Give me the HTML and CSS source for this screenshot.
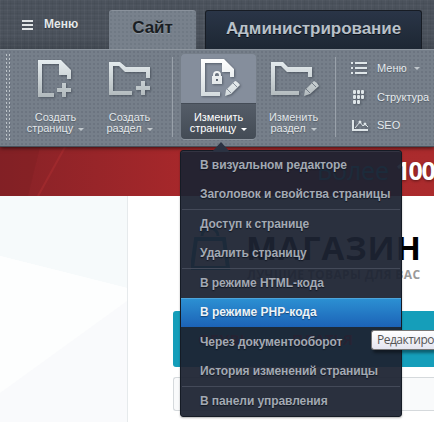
FILE: index.html
```html
<!DOCTYPE html>
<html lang="ru">
<head>
<meta charset="utf-8">
<title>Магазин</title>
<link rel="stylesheet" href="styles.css">
</head>
<body>
<svg class="defs" width="0" height="0" aria-hidden="true">
  <defs>
    <linearGradient id="metal" gradientUnits="userSpaceOnUse" x1="0" y1="0" x2="0" y2="39"><stop offset="0" stop-color="#e6edf0"/><stop offset="1" stop-color="#aeb6b9"/></linearGradient>
    <linearGradient id="bright" gradientUnits="userSpaceOnUse" x1="0" y1="0" x2="0" y2="39"><stop offset="0" stop-color="#ffffff"/><stop offset="1" stop-color="#d2dadd"/></linearGradient>
  </defs>
</svg>
<div class="panel">
  <header class="topbar">
    <div class="start"><svg width="11" height="10"><path d="M0 1h11M0 5h11M0 9h11" stroke="#e2e6e8" stroke-width="2"/></svg><span class="t" >Меню</span></div>
    <div class="tab tab-site"><span>Сайт</span></div>
    <div class="tab tab-admin"><span>Администрирование</span></div>
  </header>
  <div class="toolbar">
    <div class="grip"></div>
    <div class="tool create-page">
      <svg width="36" height="39"><path fill="url(#metal)" fill-rule="evenodd" d="M0 0H23L33 10V19H29V15H21V4H4V33H16V37H0Z"/><path fill="url(#metal)" d="M24 23h4v5h5v4h-5v5h-4v-5h-5v-4h5z"/></svg>
      <div class="label">Создать<br>страницу<i></i></div>
    </div>
    <div class="tool create-section">
      <svg width="42" height="39"><path fill="url(#metal)" d="M0 2H11L17 7H41V18H37V12H16L10 6H4V31H23V35H0Z"/><path fill="url(#metal)" d="M32 21h4v5h5v4h-5v5h-4v-5h-5v-4h5z"/></svg>
      <div class="label">Создать<br>раздел<i></i></div>
    </div>
    <div class="divider first"></div>
    <div class="tool edit-page">
      <svg width="40" height="39"><path fill="url(#bright)" d="M0 0H23L33 10V18H29V13H21V4H4V33H19V37H0Z"/><path fill="url(#bright)" fill-rule="evenodd" d="M11 17h1v-1a4 4 0 0 1 8 0v1h1v8H11ZM14 17h4v-1a2 2 0 0 0-4 0ZM15 20v2h2v-2Z"/><path fill="url(#bright)" d="M24 37l1-6 9-9q2 0 5 4L30 35Z"/><path d="M26 30l4 4M32 24l4 4" stroke="#858e9a"/></svg>
      <div class="label">Изменить<br>страницу<i></i></div>
    </div>
    <div class="tool edit-section">
      <svg width="48" height="39"><path fill="url(#metal)" d="M0 2H12L17 7H41V17H37V12H16L10 6H4V31H28V35H0Z"/><path fill="url(#metal)" d="M33 36l1-6 9-9q3 1 5 5L39 34Z"/><path d="M35 29l4 4M41 23l4 4" stroke="#737c86"/></svg>
      <div class="label">Изменить<br>раздел<i></i></div>
    </div>
    <div class="divider second"></div>
    <nav class="links">
      <div><svg width="17" height="14"><path d="M4 2h12M4 7h12M4 12h12" stroke="#dfe6e9" stroke-width="2"/><path d="M0 2h2M0 7h2M0 12h2" stroke="#dfe6e9" stroke-width="2"/></svg><span>Меню</span><i></i></div>
      <div><svg width="17" height="15"><g fill="#dfe6e9"><rect x="2" width="3" height="4" rx="1"/><rect x="6" width="3" height="4" rx="1"/><rect x="10" width="3" height="4" rx="1"/><rect x="2" y="5" width="3" height="4" rx="1"/><rect x="6" y="5" width="3" height="4" rx="1"/><rect x="10" y="5" width="3" height="4" rx="1"/><rect x="2" y="10" width="3" height="4" rx="1"/><rect x="6" y="10" width="3" height="4" rx="1"/></g></svg><span>Структура</span></div>
      <div><svg width="17" height="14"><path d="M2 1v10h15" fill="none" stroke="#dfe6e9" stroke-width="2"/><path d="M4 9l5-6 3 4 2-2 3 3" fill="none" stroke="#dfe6e9"/><circle cx="9" cy="3" r="1.5" fill="#dfe6e9"/><circle cx="14" cy="5" r="1.5" fill="#dfe6e9"/></svg><span>SEO</span></div>
    </nav>
  </div>
</div>
<main class="site">
  <section class="banner">
    <svg class="rays" width="434" height="49"><path d="M0 0h40L28 49H0Z" fill="#761d22" opacity=".3"/><path d="M65 0L38 49" stroke="#bb3436" stroke-width="2" opacity=".35"/></svg>
    <p><span>Более</span> <b>100</b></p>
  </section>
  <div class="body">
    <aside><svg width="127" height="226"><path d="M0 0H127V92L0 60Z" fill="#f6fafb"/><path d="M0 60L127 92V105L0 197Z" fill="#fdfefe"/><path d="M0 197L127 105V226H0Z" fill="#f9fafc"/></svg></aside>
    <section class="content">
      <div class="brand">
        <svg width="40" height="50"><path d="M5 17H33L37 46H1Z" fill="none" stroke="#159cb8" stroke-width="4"/><path d="M11 14a8 8 0 0 1 16 0" fill="none" stroke="#159cb8" stroke-width="3"/></svg>
        <div><h1>МАГАЗИН</h1><p>ЛУЧШИЕ ТОВАРЫ ДЛЯ ВАС</p></div>
      </div>
      <nav class="shop"><span>ОБУВЬ</span><span>ПЛАТЬЯ</span></nav>
      <div class="search"></div>
    </section>
  </div>
</main>
<div class="menu">
  <svg class="arrow" width="18" height="10"><path d="M0 10L9 0L18 10Z" fill="#2b3242"/></svg>
  <ul>
    <li><span>В визуальном редакторе</span></li>
    <li class="end"><span>Заголовок и свойства страницы</span></li>
    <li><span>Доступ к странице</span></li>
    <li class="end"><span>Удалить страницу</span></li>
    <li><span>В режиме HTML-кода</span></li>
    <li class="active"><span>В режиме PHP-кода</span></li>
    <li><span>Через документооборот</span></li>
    <li class="end"><span>История изменений страницы</span></li>
    <li><span>В панели управления</span></li>
  </ul>
</div>
<div class="tooltip">Редактиро</div>
</body>
</html>
```
FILE: styles.css
```css
* { box-sizing: border-box; }
body { margin: 0; width: 434px; height: 422px; overflow: hidden; position: relative; background: #fff; font-family: "Liberation Sans", Arial, sans-serif; }
.defs { position: absolute; }
svg { display: block; flex: none; }
p, h1, ul { margin: 0; padding: 0; }
.panel { position: relative; z-index: 1; height: 147px; box-shadow: 0 1px 4px rgba(0,0,0,.65); }
.topbar { height: 49px; display: flex; align-items: flex-end; background: repeating-linear-gradient(90deg, rgba(255,255,255,.03) 0 1px, transparent 1px 3px, rgba(0,0,0,.04) 3px 4px, transparent 4px 7px), repeating-linear-gradient(rgba(255,255,255,.025) 0 1px, transparent 1px 3px, rgba(0,0,0,.04) 3px 4px, transparent 4px 5px), linear-gradient(#4b525c 75%, #414851); }
.start { width: 109px; height: 49px; padding-left: 22px; display: flex; align-items: center; gap: 11px; color: #e3e7e9; font-weight: bold; font-size: 12px; }
.start .t { text-shadow: 0 1px 1px #30363e; position: relative; top: -1px; }
.tab { height: 39px; border-radius: 3px 3px 0 0; font-weight: bold; font-size: 17px; white-space: nowrap; text-align: center; line-height: 36px; }
.tab-site { width: 87px; background: radial-gradient(circle, #707984 .7px, transparent .9px) 0 0 / 4px 4px, #78818c; color: #1a1e23; box-shadow: inset 0 1px #8a929c; text-shadow: 0 1px #929ba5; }
.tab-admin { width: 217px; margin-left: 9px; background: linear-gradient(#2a3547, #1d2733); border: 1px solid #171c24; border-bottom: 0; color: #b9c1c9; text-shadow: 0 1px #0b1018; line-height: 35px; letter-spacing: -.05px; }
.toolbar { height: 98px; display: flex; border-top: 1px solid #8e969f; border-bottom: 1px solid #48505a; background: radial-gradient(circle, #6c7580 .7px, transparent .9px) 0 0 / 4px 4px, #767f8a; }
.grip { width: 4px; height: 88px; margin: 4px 0 0 6px; background: linear-gradient(90deg, #bdc4c9 1px, transparent 1px 3px, #bdc4c9 3px) 0 0 / 4px 2px; -webkit-mask: repeating-linear-gradient(#000 0 2px, transparent 2px 4px); mask: repeating-linear-gradient(#000 0 2px, transparent 2px 4px); }
.tool { width: 75px; padding-top: 10px; font-size: 11px; line-height: 11px; text-align: center; color: #e1e6e9; text-shadow: 0 1px 1px #515a65; }
.tool svg { filter: drop-shadow(1px 1px 1px rgba(40,48,58,.5)); }
.label { margin-top: 13px; white-space: nowrap; letter-spacing: -.05px; }
i { display: inline-block; width: 0; height: 0; border: 3px solid transparent; border-top-color: #c0c7cc; border-bottom: 0; margin: 0 0 1px 5px; }
.create-page { margin-left: 8px; }
.create-page svg { margin-left: 20px; }
.create-section { margin-left: -1px; }
.create-section svg { margin-left: 17px; }
.divider { width: 1px; height: 80px; margin-top: 7px; background: #99a1aa; }
.first { margin-left: 5px; }
.edit-page { width: 75px; height: 85px; margin: 4px 0 0 8px; padding-top: 5px; border-radius: 4px; background: linear-gradient(#858e9c 49px, #343b45 49px, #555d68 50px, #434b55); box-shadow: 0 1px #8e969f; color: #fff; }
.edit-page svg { margin-left: 20px; }
.edit-page i { border-top-color: #fff; }
.edit-page .label { margin-top: 14px; }
.edit-section svg { margin-left: 15px; }
.second { margin-left: 4px; }
.links { margin: 10px 0 0 15px; font-size: 11px; color: #e5eaed; text-shadow: 0 1px 1px #515a65; }
.links div { display: flex; align-items: center; height: 16px; margin-bottom: 13px; white-space: nowrap; }
.links svg { margin-right: 9px; filter: drop-shadow(1px 1px 1px rgba(40,48,58,.5)); }
.links i { margin: 1px 0 0 7px; }
.links div:last-child span { position: relative; top: -1px; }
.banner { position: relative; height: 49px; background: linear-gradient(90deg, #872227, #a9282b 45%, #ab2b2d); overflow: hidden; }
.rays { position: absolute; left: 0; top: 0; }
.banner p { position: relative; margin-left: 317px; font: 25px/46px "Open Sans", sans-serif; color: #fff; white-space: nowrap; text-shadow: 0 1px 3px rgba(0,0,0,.45); display: flex; gap: 7px; letter-spacing: -.2px; }
.banner span { color: #1fa5c0; }
.banner b { letter-spacing: -1.4px; }
.body { display: flex; height: 226px; }
aside { width: 128px; border-right: 1px solid #e6eaec; }
.content { width: 306px; padding: 28px 0 0 45px; }
.brand { display: flex; gap: 13px; height: 87px; padding-left: 18px; }
.brand > svg { margin-top: -2px; }
h1 { font: bold 33px/48px "Open Sans", sans-serif; color: #000; white-space: nowrap; letter-spacing: 1px; margin-left: 2px; }
.brand p { font: bold 12px/12px "Open Sans", sans-serif; color: #999; white-space: nowrap; margin: -3px 0 0 3px; letter-spacing: .36px; }
.shop { height: 56px; background: #159eba; border-radius: 3px 0 0 3px; color: #b8284f; display: flex; gap: 43px; padding-left: 25px; font: bold 15px/57px "Open Sans", sans-serif; }
.search { height: 34px; margin-top: 10px; border: 1px solid #d5d9dc; border-right: 0; border-radius: 3px 0 0 3px; background: #f9fafb; }
.menu { position: absolute; z-index: 2; left: 180px; top: 150px; width: 222px; height: 267px; border: 1px solid #151b25; border-radius: 3px; background: rgba(29,35,50,.94); box-shadow: inset 0 1px rgba(80,86,100,.35), 0 1px 2px rgba(0,0,0,.3); }
.arrow { position: absolute; left: 31px; top: -9px; }
ul { list-style: none; }
li { height: 29px; padding-left: 19px; font-weight: bold; font-size: 12px; line-height: 28px; color: #a3a9b3; white-space: nowrap; letter-spacing: -.08px; text-shadow: 0 1px 1px #111722; }
.end { height: 30px; background: linear-gradient(#444a59, #444a59) center bottom / 218px 1px no-repeat; }
.active { background: linear-gradient(#2c91d3, #1c63b7); box-shadow: inset 0 1px #4da5db; color: #eef4f8; text-shadow: 0 1px 1px #134579; margin-bottom: 1px; letter-spacing: 0; }
.tooltip { position: absolute; z-index: 3; left: 371px; top: 330px; width: 63px; height: 20px; padding-left: 5px; border: 1px solid #777; border-right: 0; border-radius: 3px 0 0 3px; background: linear-gradient(#fff, #e4e5f0); box-shadow: 2px 3px 3px rgba(0,0,0,.4); color: #555; font: 12px/18px "Open Sans", sans-serif; letter-spacing: -.5px; white-space: nowrap; }
```
